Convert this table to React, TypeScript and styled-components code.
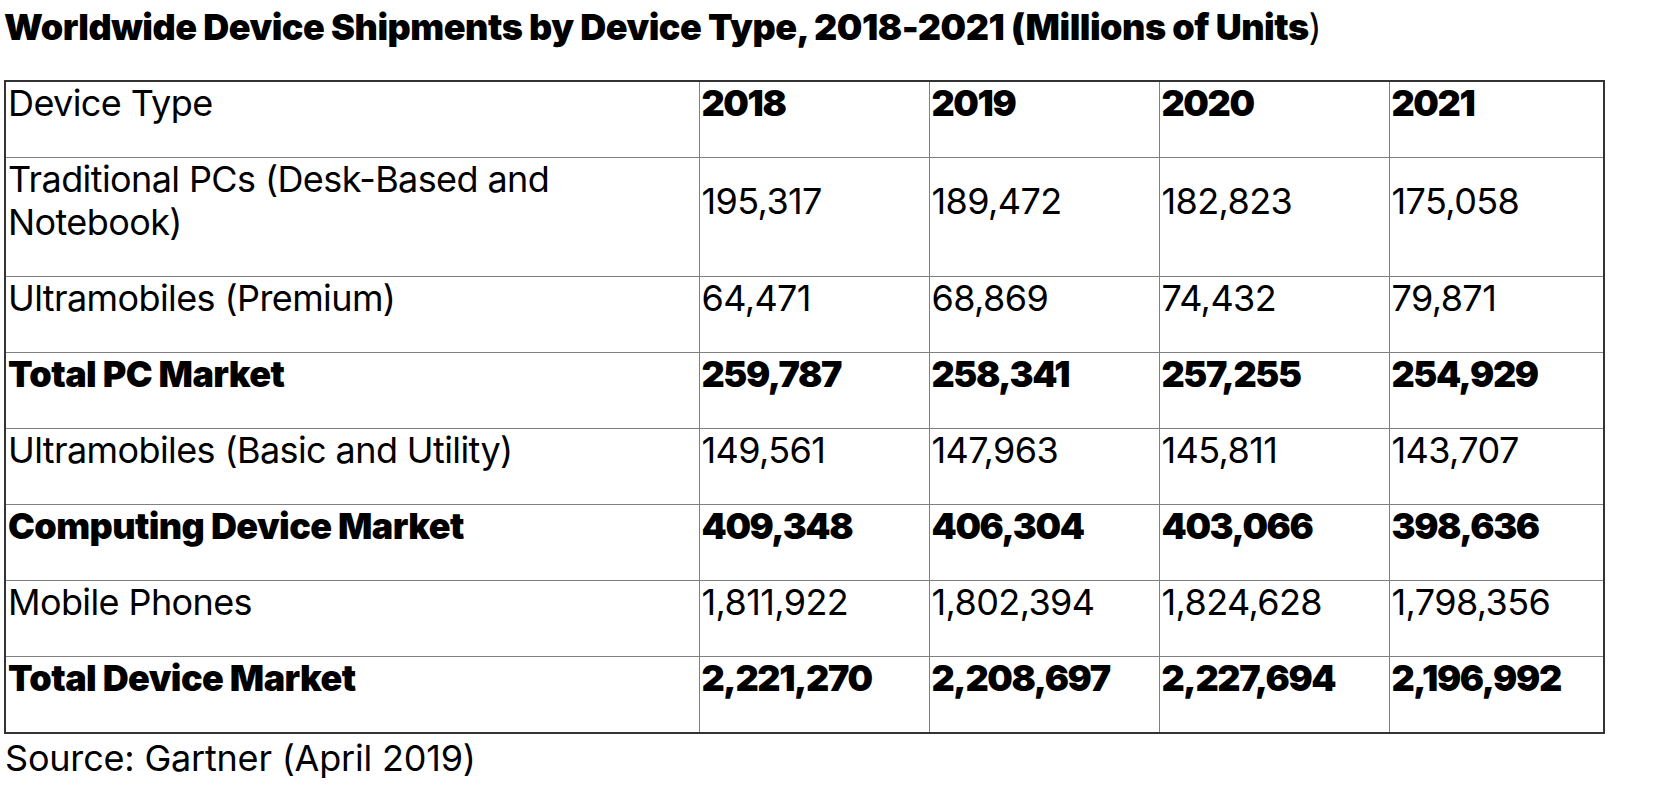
import React from 'react';
import styled, {createGlobalStyle} from "styled-components";

const GlobalStyle = createGlobalStyle`
  body {
    margin: 0;
    background: #fff;
    color: #000;
    font-family: Inter, "Liberation Sans", sans-serif;
  }
`

const Page = styled.div`
  padding: 6px 0 0 4px;
`

const Title = styled.h1`
  margin: 0 0 31px;
  font-size: 36px;
  line-height: 43px;
  font-weight: 900;
  letter-spacing: -0.5px;
`

const Thin = styled.span`
  font-weight: 400;
`

const Table = styled.table`
  width: 1599px;
  table-layout: fixed;
  border-collapse: collapse;
  border: 2px solid #333;
  font-size: 36px;
  line-height: 43px;
`

const Col = styled.col<{ $w: number }>`
  width: ${p => p.$w}px;
`

const Cell = styled.td<{ $bold?: boolean }>`
  border: 1px solid #808080;
  vertical-align: middle;
  padding: 0 4px 32px 2px;
  font-weight: ${p => p.$bold ? 900 : 400};
  letter-spacing: ${p => p.$bold ? '-1.4px' : '-0.6px'};
`

const LabelCell = styled(Cell)`
  letter-spacing: ${p => p.$bold ? '-0.6px' : '-0.6px'};
`

const Source = styled.p`
  margin: 3px 0 0 1px;
  font-size: 36px;
  line-height: 43px;
  letter-spacing: -0.2px;
`

type Row = { label: string; values: string[]; bold?: boolean }

const rows: Row[] = [
    {label: 'Traditional PCs (Desk-Based and Notebook)', values: ['195,317', '189,472', '182,823', '175,058']},
    {label: 'Ultramobiles (Premium)', values: ['64,471', '68,869', '74,432', '79,871']},
    {label: 'Total PC Market', values: ['259,787', '258,341', '257,255', '254,929'], bold: true},
    {label: 'Ultramobiles (Basic and Utility)', values: ['149,561', '147,963', '145,811', '143,707']},
    {label: 'Computing Device Market', values: ['409,348', '406,304', '403,066', '398,636'], bold: true},
    {label: 'Mobile Phones', values: ['1,811,922', '1,802,394', '1,824,628', '1,798,356']},
    {label: 'Total Device Market', values: ['2,221,270', '2,208,697', '2,227,694', '2,196,992'], bold: true},
]

const years = ['2018', '2019', '2020', '2021']
const widths = [694, 230, 230, 230, 215]

const App = () => {
    return (
        <Page>
            <GlobalStyle/>
            <Title>Worldwide Device Shipments by Device Type, 2018-2021 (Millions of Units<Thin>)</Thin></Title>
            <Table>
                <colgroup>
                    {widths.map((w, i) => <Col key={i} $w={w}/>)}
                </colgroup>
                <tbody>
                <tr>
                    <LabelCell>Device Type</LabelCell>
                    {years.map(y => <Cell key={y} $bold>{y}</Cell>)}
                </tr>
                {rows.map(row =>
                    <tr key={row.label}>
                        <LabelCell $bold={row.bold}>{row.label}</LabelCell>
                        {row.values.map((v, i) =>
                            <Cell key={i} $bold={row.bold}>{v}</Cell>
                        )}
                    </tr>
                )}
                </tbody>
            </Table>
            <Source>Source: Gartner (April 2019)</Source>
        </Page>
    );
};

export default App;
